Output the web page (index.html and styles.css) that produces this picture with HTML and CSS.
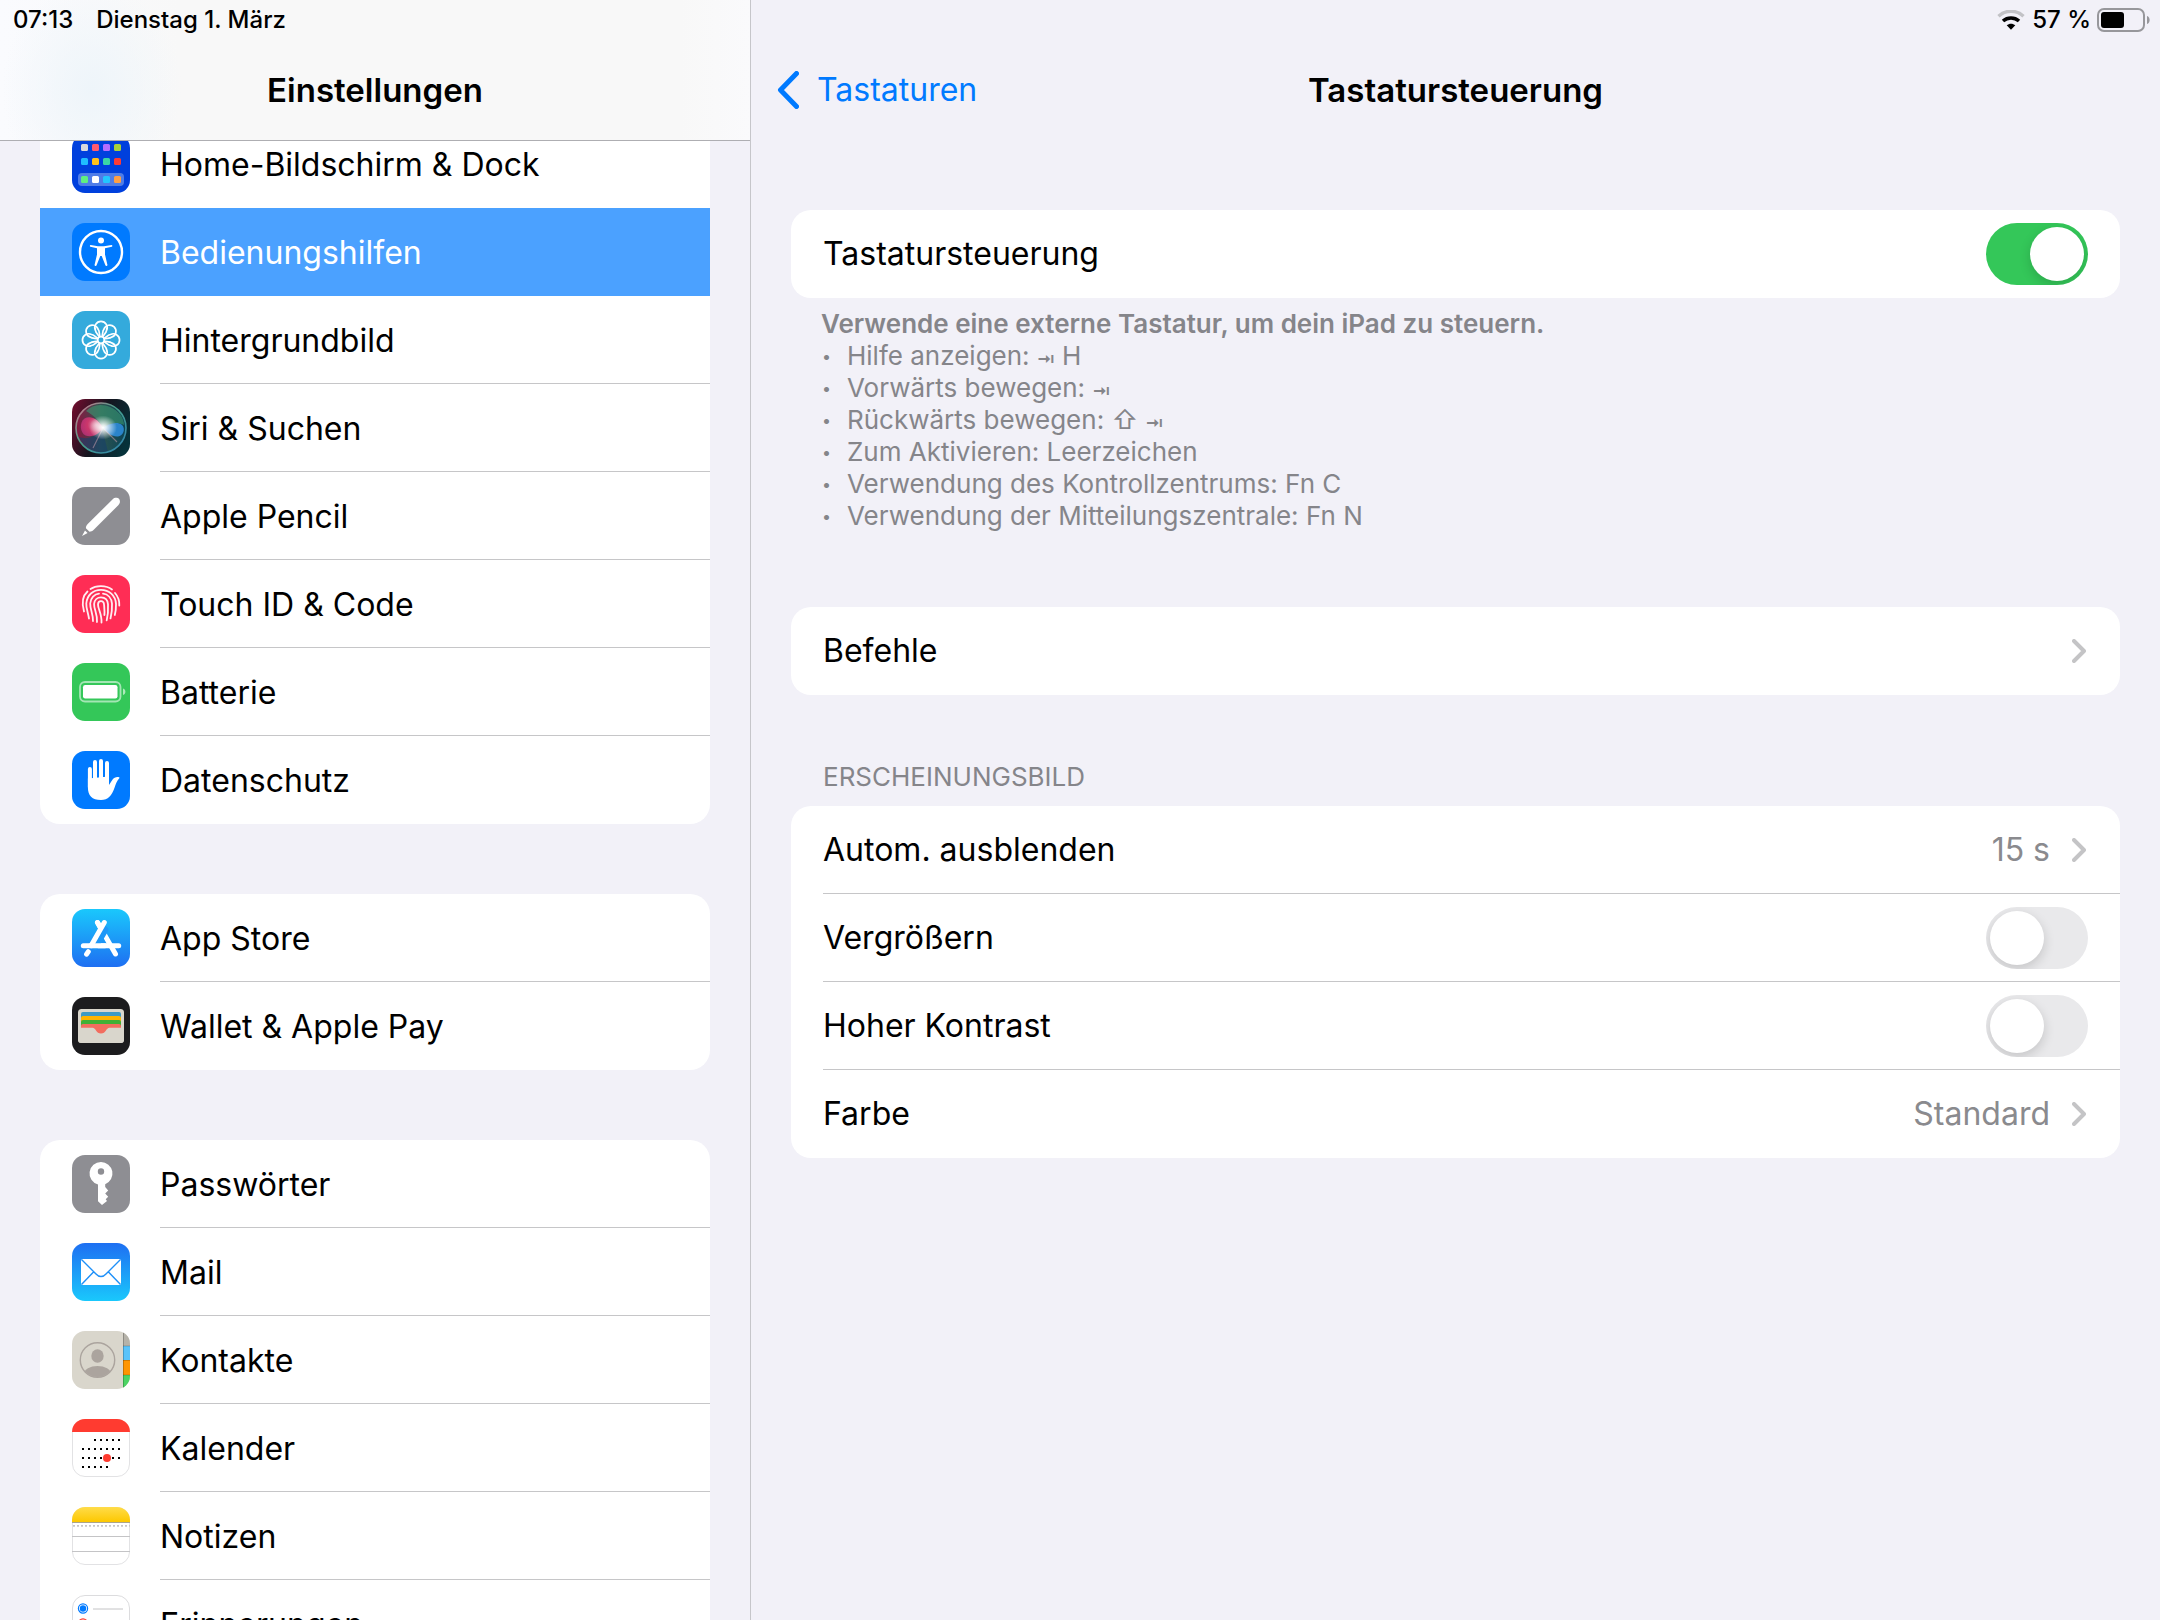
FILE: index.html
```
<!DOCTYPE html>
<html lang="de">
<head>
<meta charset="utf-8">
<meta name="viewport" content="width=device-width, initial-scale=1">
<title>Einstellungen – Tastatursteuerung</title>
<link rel="stylesheet" href="styles.css">
</head>
<body>
<div class="app">
  <aside class="sidebar">
    <header class="bar bar-sidebar">
      <div class="status"><span>07:13</span><span>Dienstag 1. März</span></div>
      <div class="title-row"><h2 class="title">Einstellungen</h2></div>
    </header>
    <nav class="list" aria-label="Einstellungen">
      <div class="card card-scrolled">
        <a class="item no-line" href="#home">
          <svg class="icon" viewBox="0 0 58 58"><rect width="58" height="58" rx="13" fill="#0040dd"/><rect x="6" y="38" width="46" height="13" rx="4" fill="#4f7de8"/>
            <rect x="9" y="9" width="7" height="7" rx="1.5" fill="#d8d8dc"/><rect x="20" y="9" width="7" height="7" rx="1.5" fill="#ff5a6e"/><rect x="31" y="9" width="7" height="7" rx="1.5" fill="#b66dff"/><rect x="42" y="9" width="7" height="7" rx="1.5" fill="#a8d23c"/>
            <rect x="9" y="23" width="7" height="7" rx="1.5" fill="#1fbcff"/><rect x="20" y="23" width="7" height="7" rx="1.5" fill="#ffc21a"/><rect x="31" y="23" width="7" height="7" rx="1.5" fill="#3bd6a5"/><rect x="42" y="23" width="7" height="7" rx="1.5" fill="#ff3b35"/>
            <rect x="9" y="41" width="7" height="7" rx="1.5" fill="#5ff07f"/><rect x="20" y="41" width="7" height="7" rx="1.5" fill="#fff"/><rect x="31" y="41" width="7" height="7" rx="1.5" fill="#22c6ff"/><rect x="42" y="41" width="7" height="7" rx="1.5" fill="#ff9f45"/></svg>
          <span class="label">Home-Bildschirm &amp; Dock</span></a>
        <a class="item selected no-line" href="#bedienungshilfen" aria-current="page">
          <svg class="icon" viewBox="0 0 58 58"><rect width="58" height="58" rx="13" fill="#007aff"/><circle cx="29" cy="29" r="21" fill="none" stroke="#fff" stroke-width="2.4"/><circle cx="29" cy="17.6" r="3" fill="#fff"/><path d="M18.6 22l7.4 1.2h6L39.600 22a.9.9 0 0 1 .2 1.700L33 25.200v6.300l2.400 10.200a1 1 0 0 1-2 .6L29.700 33h-1.400l-3.700 9.300a1 1 0 0 1-2-.6L25 31.500v-6.300l-6.600-1.500a.9.9 0 0 1 .2-1.700z" fill="#fff"/></svg>
          <span class="label">Bedienungshilfen</span></a>
        <a class="item" href="#hintergrundbild">
          <svg class="icon" viewBox="0 0 58 58"><rect width="58" height="58" rx="13" fill="#34aadc"/><g fill="none" stroke="#fff" stroke-width="1.700"><circle cx="29" cy="29" r="3.300"/>
            <path id="p" d="M27.500 26C26 23.500 23.500 21.500 23.500 19.500A6.200 6.200 0 1 1 34.500 19.500C34.500 21.500 32 23.500 30.500 26"/><use href="#p" transform="rotate(45 29 29)"/><use href="#p" transform="rotate(90 29 29)"/><use href="#p" transform="rotate(135 29 29)"/><use href="#p" transform="rotate(180 29 29)"/><use href="#p" transform="rotate(225 29 29)"/><use href="#p" transform="rotate(270 29 29)"/><use href="#p" transform="rotate(315 29 29)"/></g></svg>
          <span class="label">Hintergrundbild</span></a>
        <a class="item" href="#siri">
          <svg class="icon" viewBox="0 0 58 58"><defs>
            <linearGradient id="sb" x1="0" y1=".2" x2="1" y2=".6"><stop offset="0" stop-color="#6a0d2c"/><stop offset=".5" stop-color="#15151f"/><stop offset="1" stop-color="#06323a"/></linearGradient>
            <radialGradient id="sg" cx=".5" cy=".5" r=".5"><stop offset="0" stop-color="#fff"/><stop offset=".22" stop-color="#fff" stop-opacity=".85"/><stop offset="1" stop-color="#fff" stop-opacity="0"/></radialGradient>
            <radialGradient id="sp" cx=".7" cy=".4" r=".8"><stop offset="0" stop-color="#f4a0bc"/><stop offset=".5" stop-color="#d8386f"/><stop offset="1" stop-color="#b03078"/></radialGradient>
            <linearGradient id="sr" x1="0" y1="0" x2="1" y2="1"><stop offset="0" stop-color="#e0708c"/><stop offset=".45" stop-color="#45a08a"/><stop offset="1" stop-color="#2f7fae"/></linearGradient>
            <linearGradient id="so" x1="0" y1="0" x2="1" y2="0"><stop offset="0" stop-color="#a01648"/><stop offset=".5" stop-color="#35665f"/><stop offset="1" stop-color="#0d4a60"/></linearGradient></defs>
            <rect width="58" height="58" rx="13" fill="url(#sb)"/><circle cx="29" cy="29" r="25" fill="url(#so)" opacity=".75"/><path d="M14 12C22 3 38 4 48 15c3 4 4 8 4 11-6-3-14-2-21 3-4-8-10-13-17-17z" fill="#3a9a72" opacity=".6"/><path d="M7 38c9 3 17 0 23-9l6 24c-12 3-24-3-29-15z" fill="#16406b" opacity=".6"/>
            <path d="M31 29C27 21 19 15.500 12.500 19.500 7 23.500 8 34 13.500 36.500 20 39 27 35 31 29z" fill="url(#sp)" opacity=".9"/><path d="M31 29c5-4 14-7 19-3 4 4 1 11-4 11.500C40 38 35 34 31 29z" fill="#2f8fe0" opacity=".85"/><path d="M31 29l14 14M31 29L21 49" stroke="#d8a6b4" stroke-width="1.100" opacity=".5"/>
            <ellipse cx="31" cy="28.500" rx="14" ry="12" fill="url(#sg)"/><circle cx="29" cy="29" r="25" fill="none" stroke="url(#sr)" stroke-width="1.600"/></svg>
          <span class="label">Siri &amp; Suchen</span></a>
        <a class="item" href="#pencil">
          <svg class="icon" viewBox="0 0 58 58"><rect width="58" height="58" rx="13" fill="#8e8e93"/><path d="M40.700 12.200c2-2 5-1.600 6.200-.4 1.300 1.300 1.600 4.200-.4 6.200L21.500 43c-1 1-2.600 1.700-4 1.700l-3.600-3.400c0-1.600.6-3 1.800-4.200zM13 43.500l2.600 2.600-5.600 2.800z" fill="#fff"/></svg>
          <span class="label">Apple Pencil</span></a>
        <a class="item" href="#touchid">
          <svg class="icon" viewBox="0 0 58 58"><rect width="58" height="58" rx="13" fill="#ff2d55"/><g fill="none" stroke="#fff" stroke-width="1.800" stroke-linecap="round" stroke-opacity=".92"><path d="M18.500 14C24 10.200 34 10.200 40 14.500"/><path d="M43 18c3.500 4 4.500 8 4.300 12.500M15.500 16.500C11 20.500 9.600 28 12 36.500"/><path d="M17 43.500C16 37 14 33 14.300 28.500 15 20 21 14.800 29 14.800S43.500 20.500 44 29c.1 4-.3 7.500-1.200 11"/><path d="M21 46c.2-7-3-12-2.800-17.500C18.500 23 22.500 18.800 27 18.600M31 18.600c5 .5 8.500 4.500 9 10 .2 5-.2 10-1.500 14.800"/><path d="M25 47c.6-8-3.200-13-2.900-18 .3-4 3.200-6.600 6.900-6.600 4 0 6.700 2.600 7 7 .3 5.500 0 10.500-1.300 16"/><path d="M29.500 47.500c.5-8-3.600-14-3.500-18 .1-2 1.300-3.300 3-3.300 2 0 3 1.500 3.100 3.800.3 4 .6 7 .3 10"/></g></svg>
          <span class="label">Touch ID &amp; Code</span></a>
        <a class="item" href="#batterie">
          <svg class="icon" viewBox="0 0 58 58"><rect width="58" height="58" rx="13" fill="#34c759"/><rect x="8" y="19" width="40.500" height="19.500" rx="5" fill="none" stroke="#fff" stroke-opacity=".55" stroke-width="1.800"/><rect x="11" y="22" width="34.500" height="13.500" rx="2.200" fill="#fff"/><path d="M51 25.500c3.200 1 3.200 5.500 0 6.500z" fill="#fff" fill-opacity=".6"/></svg>
          <span class="label">Batterie</span></a>
        <a class="item no-line" href="#datenschutz">
          <svg class="icon" viewBox="0 0 58 58"><rect width="58" height="58" rx="13" fill="#007aff"/><g stroke="#fff" stroke-width="4" stroke-linecap="round"><path d="M17.900 18v18M23 11v20M29 10v20M35 12v20"/></g><path d="M15.900 27.500l21.100-2V34l3.600-5.600c1.200-1.800 4-2.800 6.400-2.200.6.200.7.700.3 1.100-2.300 2.200-3.600 6-4.700 9.200C40 44.500 36 49 29 49c-9 0-13.100-4.500-13.100-12.500z" fill="#fff"/></svg>
          <span class="label">Datenschutz</span></a>
      </div>
      <div class="card">
        <a class="item" href="#appstore">
          <svg class="icon" viewBox="0 0 58 58"><defs><linearGradient id="as" x1="0" y1="0" x2="0" y2="1"><stop offset="0" stop-color="#1ac8fc"/><stop offset="1" stop-color="#1e6ff2"/></linearGradient></defs><rect width="58" height="58" rx="13" fill="url(#as)"/><g fill="none" stroke-linecap="round"><path d="M25.500 13.500L43.500 45" stroke="#fff" stroke-width="5"/><path d="M11.300 36.800h35.400" stroke="#fff" stroke-width="5"/><path d="M32.500 21L23 37" stroke="#1e98f8" stroke-width="7.500"/><path d="M32.300 13.500L19.500 36" stroke="#fff" stroke-width="5"/><path d="M25.500 13.500l3 5.200" stroke="#fff" stroke-width="5"/><path d="M19 36.800h14" stroke="#fff" stroke-width="5"/><path d="M16.300 42.700l-1.700 2.500" stroke="#fff" stroke-width="5"/></g></svg>
          <span class="label">App Store</span></a>
        <a class="item no-line" href="#wallet">
          <svg class="icon" viewBox="0 0 58 58"><rect width="58" height="58" rx="13" fill="#1c1c1e"/><rect x="6" y="12" width="46" height="34" rx="3.500" fill="#d9d6cc"/><rect x="9" y="15" width="40" height="10" rx="2" fill="#3d9ac6"/><path d="M9 21a2 2 0 0 1 2-2h36a2 2 0 0 1 2 2v4H9z" fill="#ffb400"/><path d="M9 25a2 2 0 0 1 2-2h36a2 2 0 0 1 2 2v4H9z" fill="#40b036"/><path d="M9 29a2 2 0 0 1 2-2h36a2 2 0 0 1 2 2v9H9z" fill="#f26d5f"/><path d="M6 30.700h14.500c3.500 0 3.500 5.800 8.500 5.800s5-5.800 8.500-5.800H52v11.800a3.500 3.500 0 0 1-3.500 3.500h-39A3.500 3.500 0 0 1 6 42.500z" fill="#d9d6cc"/></svg>
          <span class="label">Wallet &amp; Apple Pay</span></a>
      </div>
      <div class="card">
        <a class="item" href="#passwoerter">
          <svg class="icon" viewBox="0 0 58 58"><rect width="58" height="58" rx="13" fill="#8e8e93"/><path fill-rule="evenodd" d="M29 7a11.500 11.500 0 0 1 4.200 22.200V32l3 3.600-3 3 3 3.200-2.500 2.400 1.300 1.700L30 50l-4-3.700V29.600A11.500 11.500 0 0 1 29 7zm0 6.300a3.200 3.200 0 1 0 0 6.400 3.200 3.200 0 0 0 0-6.400z" fill="#fff"/></svg>
          <span class="label">Passwörter</span></a>
        <a class="item" href="#mail">
          <svg class="icon" viewBox="0 0 58 58"><defs><linearGradient id="ml" x1="0" y1="0" x2="0" y2="1"><stop offset="0" stop-color="#1e6ff2"/><stop offset="1" stop-color="#1ac8fc"/></linearGradient></defs><rect width="58" height="58" rx="13" fill="url(#ml)"/><rect x="9" y="16" width="40" height="26" rx="1.500" fill="#fff"/><path d="M9.500 16.500L24 31c3 3.400 7 3.400 10 0l14.500-14.500M9.500 41.500L21.500 29M48.500 41.500L36.500 29" fill="none" stroke="#1e90f8" stroke-width="1.400"/></svg>
          <span class="label">Mail</span></a>
        <a class="item" href="#kontakte">
          <svg class="icon" viewBox="0 0 58 58"><defs><clipPath id="kr"><rect width="58" height="58" rx="13"/></clipPath><clipPath id="kc"><circle cx="25.500" cy="29" r="17"/></clipPath></defs><g clip-path="url(#kr)"><path d="M0 0h58v58H0z" fill="#d9d6cc"/><path d="M51 0h7v15h-7z" fill="#b5b2a9"/><path d="M51 15h7v14h-7z" fill="#5ac3fa"/><path d="M51 29h7v15h-7z" fill="#ff9500"/><path d="M51 44h7v14h-7z" fill="#4cd464"/><path d="M51.500 0v58" stroke="#000" stroke-opacity=".22"/><path d="M51 15h7M51 29.500h7M51 44h7" stroke="#000" stroke-opacity=".18"/></g><circle cx="25.500" cy="29" r="17.200" fill="none" stroke="#aba49e" stroke-width="1.400"/><ellipse cx="25.500" cy="25" rx="6.200" ry="6.700" fill="#aba49e"/><ellipse cx="25.500" cy="43" rx="13.500" ry="8" fill="#aba49e" clip-path="url(#kc)"/></svg>
          <span class="label">Kontakte</span></a>
        <a class="item" href="#kalender">
          <svg class="icon" viewBox="0 0 58 58"><rect x=".5" y=".5" width="57" height="57" rx="12.500" fill="#fff" stroke="#e2e2e4"/><path d="M0 13A13 13 0 0 1 13 0h32a13 13 0 0 1 13 13z" fill="#ff3b30"/><g stroke="#000" stroke-width="2" stroke-dasharray="2 4"><path d="M22 21h26M10 30h38M10 39h38M10 48h26"/></g><circle cx="35" cy="39" r="4" fill="#ff3b30"/></svg>
          <span class="label">Kalender</span></a>
        <a class="item" href="#notizen">
          <svg class="icon" viewBox="0 0 58 58"><defs><linearGradient id="nz" x1="0" y1="0" x2="0" y2="1"><stop offset="0" stop-color="#ffdc4a"/><stop offset="1" stop-color="#fdc800"/></linearGradient></defs><rect x=".5" y=".5" width="57" height="57" rx="12.500" fill="#fff" stroke="#e2e2e4"/><path d="M0 15v-2A13 13 0 0 1 13 0h32a13 13 0 0 1 13 13v2z" fill="url(#nz)"/><path d="M0 15.500h58" stroke="#a9a48f"/><path d="M1 18.800h57" stroke="#c6c6c8" stroke-width="1.800" stroke-dasharray="2 2"/><path d="M0 29.500h58M0 44.500h58" stroke="#c4c4c6"/></svg>
          <span class="label">Notizen</span></a>
        <a class="item no-line" href="#erinnerungen">
          <svg class="icon" viewBox="0 0 58 58"><rect x=".5" y=".5" width="57" height="57" rx="12.500" fill="#fff" stroke="#dcdcde"/><g stroke-width="1.200" fill="none"><circle cx="11" cy="13.500" r="4.600" stroke="#007aff"/><circle cx="11" cy="28.500" r="4.600" stroke="#ff3b30"/><circle cx="11" cy="43.500" r="4.600" stroke="#ff9500"/></g><circle cx="11" cy="13.500" r="3.200" fill="#007aff"/><circle cx="11" cy="28.500" r="3.200" fill="#ff3b30"/><circle cx="11" cy="43.500" r="3.200" fill="#ff9500"/><path d="M21 14h30M21 29h30M21 44h30" stroke="#c4c4c6"/></svg>
          <span class="label">Erinnerungen</span></a>
      </div>
    </nav>
  </aside>

  <main class="detail">
    <header class="bar">
      <div class="status status-right">
        <svg class="wifi" viewBox="0 0 28 20" role="img" aria-label="WLAN"><path d="M1.500 6.200C8.500-.4 19.500-.4 26.500 6.200" fill="none" stroke="#c2c2c6" stroke-width="3.400"/><path d="M6 11c4.600-4 11.400-4 16 0" fill="none" stroke="#000" stroke-width="3.600"/><path d="M9.700 15.300c2.500-2.200 6.100-2.200 8.600 0L14 19.800z" fill="#000"/></svg>
        <span>57 %</span>
        <svg class="battery" viewBox="0 0 54 24" role="img" aria-label="Batterie"><rect x="1" y="1" width="46" height="22" rx="6" fill="none" stroke="#97979b" stroke-width="2"/><rect x="4" y="4" width="23" height="16" rx="3" fill="#000"/><path d="M50 8c3.500 1 3.500 7 0 8z" fill="#97979b"/></svg>
      </div>
      <div class="title-row title-row-detail">
        <a class="back" href="#tastaturen"><svg class="back-chevron" viewBox="0 0 22 38"><path d="M19.500 2.500L3.500 19l16 16.500" fill="none" stroke="#007aff" stroke-width="5" stroke-linecap="round" stroke-linejoin="round"/></svg>Tastaturen</a>
        <h1 class="title">Tastatursteuerung</h1>
      </div>
    </header>
    <div class="content">
      <section>
        <div class="card">
          <div class="row"><label class="label" for="fka">Tastatursteuerung</label><input class="switch" id="fka" type="checkbox" role="switch" checked></div>
        </div>
        <div class="note">
          <strong>Verwende eine externe Tastatur, um dein iPad zu steuern.</strong>
          <ul class="keys">
            <li>Hilfe anzeigen: <span class="tab">⇥</span> H</li>
            <li>Vorwärts bewegen: <span class="tab">⇥</span></li>
            <li>Rückwärts bewegen: ⇧ <span class="tab">⇥</span></li>
            <li>Zum Aktivieren: Leerzeichen</li>
            <li>Verwendung des Kontrollzentrums: Fn C</li>
            <li>Verwendung der Mitteilungszentrale: Fn N</li>
          </ul>
        </div>
      </section>
      <section class="card">
        <a class="row" href="#befehle"><span class="label">Befehle</span><svg class="chevron" viewBox="0 0 14 24"><path d="M2 2l10 10L2 22"/></svg></a>
      </section>
      <section>
        <h3 class="section-title">ERSCHEINUNGSBILD</h3>
        <div class="card">
          <a class="row" href="#ausblenden"><span class="label">Autom. ausblenden</span><span class="value">15 s</span><svg class="chevron" viewBox="0 0 14 24"><path d="M2 2l10 10L2 22"/></svg></a>
          <div class="row"><label class="label" for="gross">Vergrößern</label><input class="switch" id="gross" type="checkbox" role="switch"></div>
          <div class="row"><label class="label" for="kontrast">Hoher Kontrast</label><input class="switch" id="kontrast" type="checkbox" role="switch"></div>
          <a class="row" href="#farbe"><span class="label">Farbe</span><span class="value">Standard</span><svg class="chevron" viewBox="0 0 14 24"><path d="M2 2l10 10L2 22"/></svg></a>
        </div>
      </section>
    </div>
  </main>
</div>
</body>
</html>
```
FILE: styles.css
```
* { box-sizing: border-box; }

body {
  margin: 0;
  background: #f2f1f8;
  color: #000;
  font: 400 32px/40px Inter, "Liberation Sans", sans-serif;
}

a { color: inherit; text-decoration: none; }
h1, h2, h3, ul { margin: 0; padding: 0; font-size: inherit; font-weight: inherit; }
svg { display: block; flex: none; }

.app {
  display: grid;
  grid-template-columns: 751px minmax(0, 1fr);
  height: 100vh;
  overflow: hidden;
}

/* Bars */
.bar { display: flex; flex-direction: column; height: 141px; flex: none; }
.status {
  display: flex;
  align-items: center;
  gap: 23px;
  height: 40px;
  padding: 0 13px;
  font-size: 24px;
  font-weight: 500;
}
.status-right { justify-content: flex-end; gap: 6px; padding: 0 9px; }
.wifi { width: 28px; height: 20px; margin-right: 1px; }
.battery { width: 54px; height: 24px; }
.title-row { display: grid; place-items: center; height: 100px; }
.title { font-size: 33px; font-weight: 600; }
.title-row-detail { grid-template-columns: 1fr auto 1fr; padding: 0 26px; }
.back {
  display: flex;
  align-items: center;
  justify-self: start;
  gap: 18px;
  color: #007aff;
}
.back-chevron { width: 22px; height: 38px; }

/* Sidebar */
.sidebar {
  display: flex;
  flex-direction: column;
  min-height: 0;
  overflow: hidden;
  border-right: 1px solid #c6c6ca;
}
.bar-sidebar {
  z-index: 1;
  border-bottom: 1px solid #aeaeb2;
  background:
    radial-gradient(ellipse 90px 110px at 92px 90px, #eef5fa, rgba(238, 245, 250, 0)),
    linear-gradient(90deg, #fafbfe, #f8f8f8 180px, #f8f8f8 680px, #fafafc);
}
.list {
  display: flex;
  flex-direction: column;
  gap: 70px;
  margin-top: -21px;
  padding: 0 40px;
}
.card { border-radius: 20px; background: #fff; overflow: hidden; flex: none; }
.card-scrolled { border-top-left-radius: 0; border-top-right-radius: 0; }

.item { display: flex; align-items: center; gap: 30px; height: 88px; padding-left: 32px; }
.icon { width: 58px; height: 58px; }
.item .label {
  flex: 1;
  height: 88px;
  line-height: 90px;
  border-bottom: 1px solid #c6c6c8;
}
.item.no-line .label { border-bottom: 0; }
.selected { background: #4ba1ff; color: #fff; }

/* Detail pane */
.detail { min-width: 0; }
.content { padding: 69px 40px 0; }
.row {
  position: relative;
  display: flex;
  align-items: center;
  height: 88px;
  padding: 0 32px;
}
.row .label { flex: 1; line-height: 88px; }
.row:not(:last-child)::after {
  content: "";
  position: absolute;
  bottom: 0;
  left: 32px;
  right: 0;
  border-top: 1px solid #c6c6c8;
}
.value { color: #8a8a8e; }
.chevron {
  width: 14px;
  height: 24px;
  margin: 0 2px 0 22px;
  fill: none;
  stroke: #c4c4c6;
  stroke-width: 4;
  stroke-linecap: round;
  stroke-linejoin: round;
}

.switch {
  appearance: none;
  width: 102px;
  height: 62px;
  margin: 0;
  padding: 4px;
  border-radius: 31px;
  background: #e9e9eb;
  overflow: hidden;
}
.switch::before {
  content: "";
  display: block;
  width: 54px;
  height: 54px;
  border-radius: 50%;
  background: #fff;
  box-shadow: 0 4px 12px rgba(0, 0, 0, .16);
}
.switch:checked { background: #34c759; }
.switch:checked::before { margin-left: 40px; }

.note { padding: 10px 30px 75px; color: #85858a; font-size: 26px; line-height: 32px; }
.note strong { display: block; font-weight: 600; }
.keys { list-style: none; }
.keys li { height: 32px; white-space: nowrap; }
.keys li::before {
  content: "•";
  display: inline-block;
  width: 25px;
  padding-left: 1px;
  font-size: 16px;
  line-height: 20px;
  vertical-align: 3px;
}
.tab { font-size: 17px; font-weight: 700; line-height: 20px; }
.section-title {
  padding: 66px 32px 13px;
  color: #85858a;
  font-size: 26px;
  line-height: 32px;
}
```
